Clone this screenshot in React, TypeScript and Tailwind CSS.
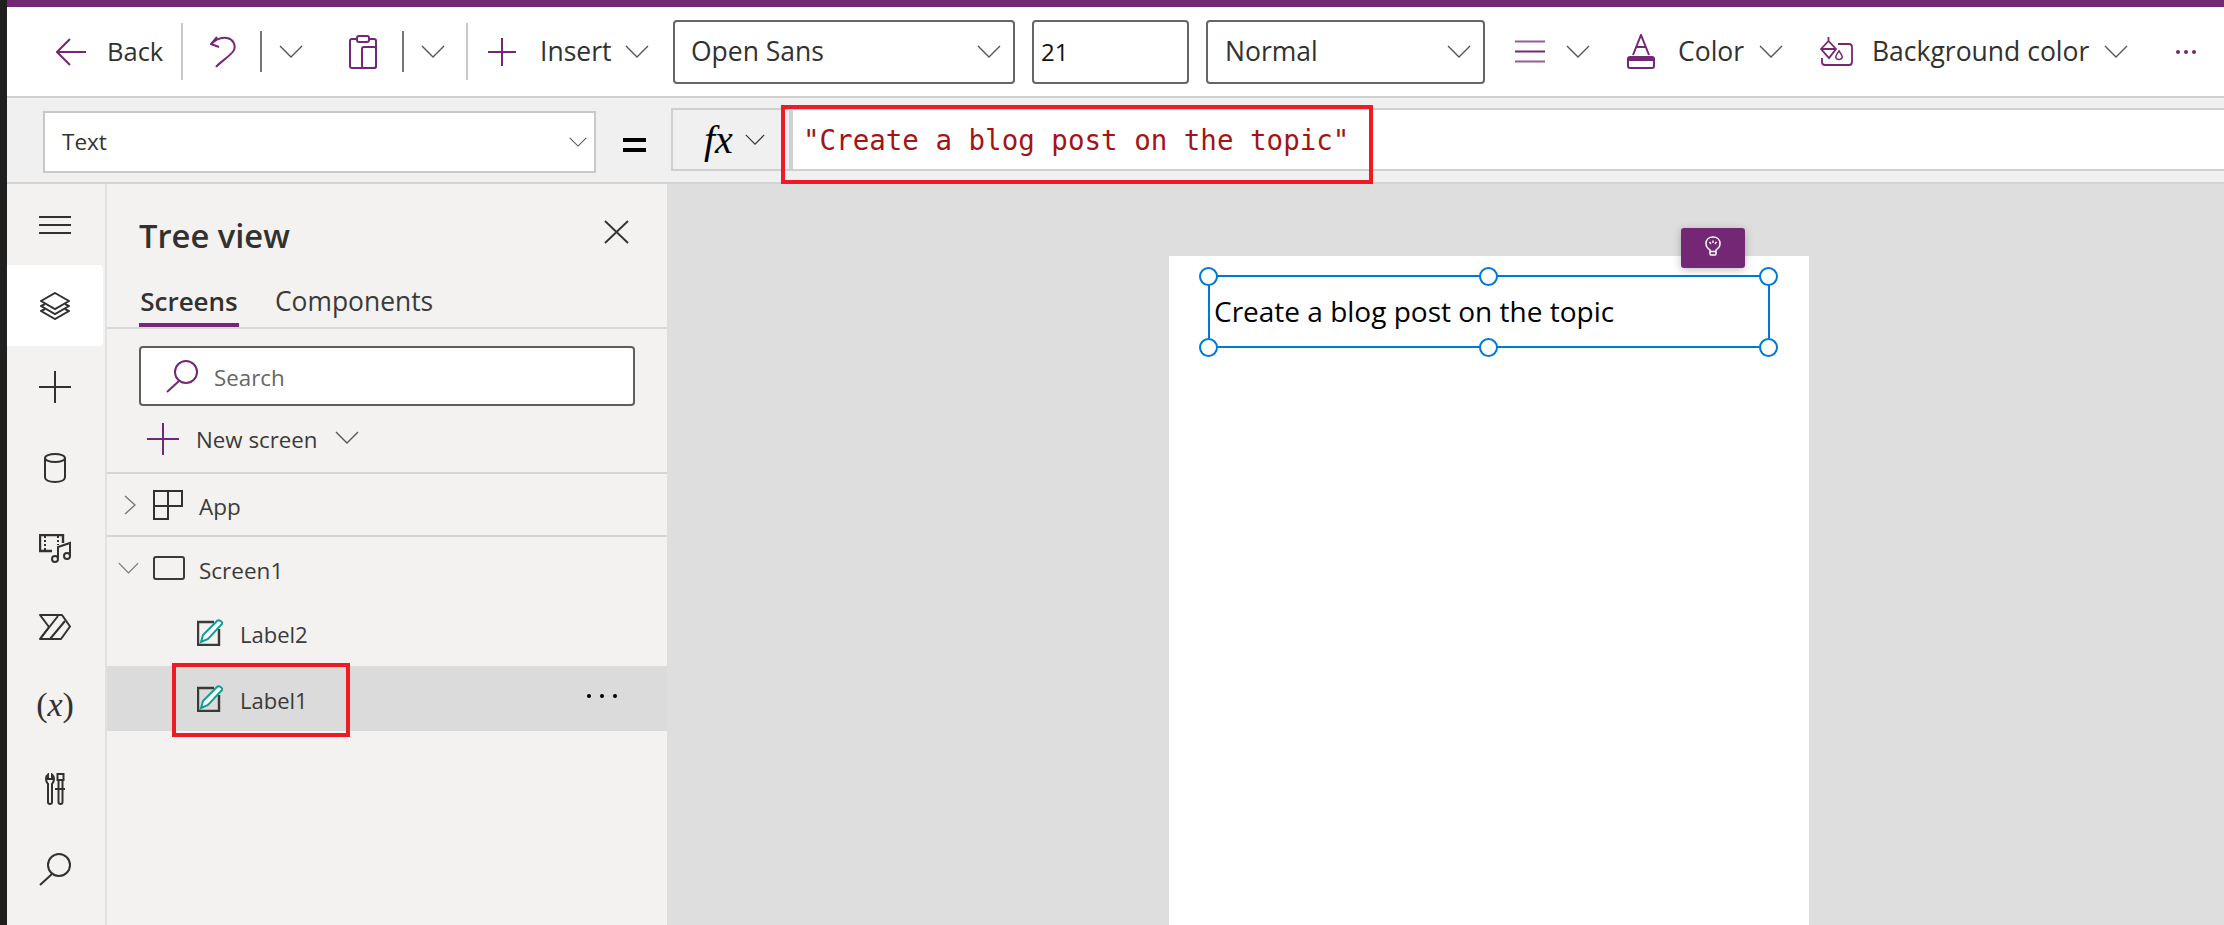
const PURPLE = "#742774";
const DARK = "#323130";

function Chevron({ className = "", color = "#555" }: { className?: string; color?: string }) {
  return (
    <svg width="24" height="13" viewBox="0 0 24 13" fill="none" className={className}>
      <path d="M1 1 L12 12 L23 1" stroke={color} strokeWidth="1.4" />
    </svg>
  );
}

function Plus({ size, color, className = "" }: { size: number; color: string; className?: string }) {
  const m = size / 2;
  return (
    <svg width={size} height={size} viewBox={`0 0 ${size} ${size}`} className={className}>
      <path d={`M0 ${m} H${size} M${m} 0 V${size}`} stroke={color} strokeWidth="2" />
    </svg>
  );
}

function Magnifier({ color, className = "" }: { color: string; className?: string }) {
  return (
    <svg width="32" height="33" viewBox="0 0 32 33" fill="none" className={className}>
      <ellipse cx="20" cy="12" rx="11" ry="11" stroke={color} strokeWidth="2" />
      <path d="M13 21 L1 32" stroke={color} strokeWidth="2" />
    </svg>
  );
}

function LabelIcon() {
  return (
    <svg width="26" height="27" viewBox="0 0 26 27" fill="none">
      <path d="M17 3 H1 V26 H22 V10" stroke="#3b3a39" strokeWidth="2.4" />
      <path d="M4 23 L6 16 L20 2 C22 0 26 3 25 5 L11 20 Z" fill="#fff" stroke="#0f9d94" strokeWidth="2" />
    </svg>
  );
}

function RailIcon({ children, active = false }: { children: React.ReactNode; active?: boolean }) {
  return (
    <div className={`w-[96px] h-[81px] flex items-center justify-center ${active ? "bg-white rounded-r-[4px]" : ""}`}>
      {children}
    </div>
  );
}

function Toolbar() {
  return (
    <div className="h-[91px] bg-white border-b-2 border-[#d0d0d0] flex items-center text-[26.5px] text-[#323130]">
      <svg width="30" height="28" viewBox="0 0 30 28" fill="none" className="ml-[49px]">
        <path d="M14 1 L1 14 L14 27 M1 14 H30" stroke={PURPLE} strokeWidth="2" />
      </svg>
      <span className="ml-[21px] w-[58px] text-[25.5px]">Back</span>
      <div className="ml-[16px] w-[2px] h-[57px] bg-[#c8c8c8]" />
      <svg width="26" height="32" viewBox="0 0 26 32" fill="none" className="ml-[27px]">
        <path d="M7 1 L1 8 L9 11 M1 8 C6 3 12 1 17 2 C23 3 26 9 24 14 C22 19 10 26 6 31" stroke={PURPLE} strokeWidth="2" />
      </svg>
      <div className="ml-[24px] w-[2px] h-[41px] bg-[#777]" />
      <Chevron className="ml-[17px]" />
      <svg width="28" height="34" viewBox="0 0 28 34" fill="none" className="ml-[46px]">
        <path d="M8 4 H3 Q1 4 1 6 V31 Q1 33 3 33 H25 Q27 33 27 31 V6 Q27 4 25 4 H20" stroke={PURPLE} strokeWidth="2" />
        <rect x="8" y="1" width="12" height="6" rx="2" stroke={PURPLE} strokeWidth="2" fill="#fff" />
        <rect x="13" y="12" width="14" height="21" rx="2" stroke={PURPLE} strokeWidth="2" fill="#fff" />
      </svg>
      <div className="ml-[25px] w-[2px] h-[41px] bg-[#777]" />
      <Chevron className="ml-[17px]" />
      <div className="ml-[21px] w-[2px] h-[57px] bg-[#c8c8c8]" />
      <Plus size={28} color={PURPLE} className="ml-[20px]" />
      <span className="ml-[24px] w-[70px]">Insert</span>
      <Chevron className="ml-[15px]" />
      <div className="ml-[24px] w-[342px] h-[64px] border-2 border-[#666] rounded-[4px] flex items-center pl-[16px]">
        <span className="flex-1">Open Sans</span>
        <Chevron className="mr-[12px]" />
      </div>
      <div className="ml-[17px] w-[157px] h-[64px] border-2 border-[#666] rounded-[4px] flex items-center pl-[7px] text-[24px] text-[#111]">21</div>
      <div className="ml-[17px] w-[279px] h-[64px] border-2 border-[#666] rounded-[4px] flex items-center pl-[17px]">
        <span className="flex-1">Normal</span>
        <Chevron className="mr-[12px]" />
      </div>
      <svg width="30" height="23" viewBox="0 0 30 23" fill="none" className="ml-[30px]">
        <path d="M0 1.5 H30 M0 21.5 H30" stroke={PURPLE} strokeWidth="2" opacity="0.75" />
        <path d="M0 11.5 H30" stroke={PURPLE} strokeWidth="2" />
      </svg>
      <Chevron className="ml-[21px]" />
      <svg width="28" height="35" viewBox="0 0 28 35" fill="none" className="ml-[37px]">
        <path d="M6 21 L14 1 L22 21 M9 13 H19" stroke={PURPLE} strokeWidth="2" />
        <rect x="1" y="23" width="26" height="11" rx="2" stroke={PURPLE} strokeWidth="2" fill="#fff" />
        <path d="M1 25 Q1 23 3 23 H25 Q27 23 27 25 V27 H1 Z" fill={PURPLE} />
      </svg>
      <span className="ml-[23px] w-[66px]">Color</span>
      <Chevron className="ml-[15px]" />
      <svg width="35" height="30" viewBox="0 0 35 30" fill="none" className="ml-[35px]">
        <path d="M20 7 H31 Q34 7 34 10 V25 Q34 28 31 28 H7 Q4 28 4 25 V21" stroke={PURPLE} strokeWidth="1.8" />
        <path d="M10.5 0 V5 M3 12 L10.5 4 L18 12 L11 21 Z M3 12 H18" stroke={PURPLE} strokeWidth="1.8" />
        <path d="M21 14 C19 17 17 19 18 21 C19 23 23 23 24 21 C25 19 23 17 21 14 Z" stroke={PURPLE} strokeWidth="1.6" />
      </svg>
      <span className="ml-[19px] w-[216px] whitespace-nowrap">Background color</span>
      <Chevron className="ml-[16px]" />
      <div className="ml-[48px] flex gap-[4px]">
        <div className="w-[4px] h-[4px] rounded-full bg-[#742774]" />
        <div className="w-[4px] h-[4px] rounded-full bg-[#742774]" />
        <div className="w-[4px] h-[4px] rounded-full bg-[#742774]" />
      </div>
    </div>
  );
}

function FormulaBar() {
  return (
    <div className="relative h-[86px] bg-[#f0f0f0] border-b-2 border-[#d4d4d4] flex items-start">
      <div className="ml-[36px] mt-[13px] w-[553px] h-[62px] bg-white border-2 border-[#c8c8c8] flex items-center pl-[17px] pr-[7px] text-[22.5px] text-[#333]">
        <span className="flex-1">Text</span>
        <Chevron className="w-[18px] h-[10px]" />
      </div>
      <div className="ml-[27px] mt-[40px] w-[23px] h-[14px] border-y-[4px] border-black" />
      <div className="ml-[25px] mt-[10px] w-[120px] h-[63px] border-2 border-[#d0d0d0] flex items-center pl-[31px]">
        <span className="font-['Liberation_Serif',serif] italic text-[40px] text-black leading-none">fx</span>
        <Chevron className="ml-[12px] w-[20px] h-[11px]" color="#333" />
      </div>
      <div className="mt-[10px] flex-1 h-[63px] bg-white border-y-2 border-l-2 border-[#d0d0d0] flex items-center pl-[10px] pt-[3px] font-['DejaVu_Sans_Mono',monospace] text-[27.5px] text-[#a31515] whitespace-pre">
        "Create a blog post on the topic"
      </div>
      <div className="absolute left-[774px] top-[7px] w-[592px] h-[79px] border-[4px] border-[#ed1c24]" />
    </div>
  );
}

function Rail() {
  return (
    <div className="w-[100px] bg-[#f3f2f1] border-r-2 border-[#e1e1e1] flex flex-col">
      <RailIcon>
        <svg width="32" height="18" viewBox="0 0 32 18" fill="none">
          <path d="M0 1 H32 M0 9 H32 M0 17 H32" stroke={DARK} strokeWidth="2" />
        </svg>
      </RailIcon>
      <RailIcon active>
        <svg width="30" height="28" viewBox="0 0 30 28" fill="none">
          <path d="M15 1 L29 9 L15 17 L1 9 Z" stroke={DARK} strokeWidth="2" fill="#fff" />
          <path d="M5 12 L1 14 L15 22 L29 14 L25 12" stroke={DARK} strokeWidth="2" />
          <path d="M5 17 L1 19 L15 27 L29 19 L25 17" stroke={DARK} strokeWidth="2" />
        </svg>
      </RailIcon>
      <RailIcon>
        <Plus size={32} color={DARK} />
      </RailIcon>
      <RailIcon>
        <svg width="22" height="30" viewBox="0 0 22 30" fill="none">
          <ellipse cx="11" cy="5" rx="10" ry="4" stroke={DARK} strokeWidth="2" />
          <path d="M1 5 V24 C1 27 5 29 11 29 C17 29 21 27 21 24 V5" stroke={DARK} strokeWidth="2" />
        </svg>
      </RailIcon>
      <RailIcon>
        <svg width="33" height="29" viewBox="0 0 33 29" fill="none">
          <path d="M13 17 H1 V1 H24 V9" stroke={DARK} strokeWidth="2.4" />
          <path d="M6 2 V17 M19 2 V11" stroke={DARK} strokeWidth="2" strokeDasharray="2 2" />
          <path d="M19 24 V13 L31 9 V22" stroke={DARK} strokeWidth="2" />
          <circle cx="16" cy="25" r="3" stroke={DARK} strokeWidth="2" />
          <circle cx="28" cy="22" r="3" stroke={DARK} strokeWidth="2" />
        </svg>
      </RailIcon>
      <RailIcon>
        <svg width="32" height="26" viewBox="0 0 32 26" fill="none" className="mb-[6px]">
          <path d="M1 1 H23 L31 12.5 L22 25 H1 L10 13 Z" stroke={DARK} strokeWidth="2" strokeLinejoin="round" />
          <path d="M1 25 L19 2 M11 25 L26 7" stroke={DARK} strokeWidth="2" />
        </svg>
      </RailIcon>
      <RailIcon>
        <span className="mb-[11px] font-['Liberation_Serif',serif] text-[34px] text-[#323130] leading-none">
          (<span className="italic">x</span>)
        </span>
      </RailIcon>
      <RailIcon>
        <svg width="20" height="32" viewBox="0 0 20 32" fill="none" className="mb-[6px]">
          <path d="M3 1.5 C1.5 2.5 1 4 1 6 C1 8 2 10 3 11 V29 Q3 31 5 31 Q7 31 7 29 V11 C8 10 9 8 9 6 C9 4 8.5 2.5 7 1.5 V6 H3 Z" stroke={DARK} strokeWidth="2" />
          <path d="M12.5 1 H18.5 V7 H12.5 Z M13.5 7 V29 Q13.5 31 15.5 31 Q17.5 31 17.5 29 V7 M10 16 H20" stroke={DARK} strokeWidth="2" />
        </svg>
      </RailIcon>
      <RailIcon>
        <Magnifier color={DARK} className="mb-[6px]" />
      </RailIcon>
    </div>
  );
}

function TreePanel() {
  return (
    <div className="w-[560px] bg-[#f3f2f1] flex flex-col text-[#3b3a39]">
      <div className="h-[78px] px-[32px] flex items-end justify-between">
        <span className="mb-[6px] text-[32.7px] font-semibold leading-[40px] text-[#323130]">Tree view</span>
        <svg width="25" height="24" viewBox="0 0 25 24" fill="none" className="mr-[6px] mb-[18px]">
          <path d="M1 1 L24 23 M24 1 L1 23" stroke={DARK} strokeWidth="1.8" />
        </svg>
      </div>
      <div className="h-[67px] border-b-2 border-[#d8d8d8] px-[32px] flex items-end text-[26.4px]">
        <div className="w-[100px] text-center border-b-4 border-[#742774] font-semibold text-[26px] text-[#323130] h-[50px] leading-[48px] whitespace-nowrap">Screens</div>
        <div className="ml-[36px] h-[50px] leading-[48px]">Components</div>
      </div>
      <div className="mx-[32px] mt-[17px] w-[496px] h-[60px] bg-white border-2 border-[#605e5c] rounded-[4px] flex items-center pl-[25px] text-[#666] text-[22.3px]">
        <Magnifier color={PURPLE} />
        <span className="ml-[16px] mt-[3px]">Search</span>
      </div>
      <div className="h-[68px] border-b-2 border-[#d4d4d4] flex items-center pl-[40px] text-[22.3px]">
        <Plus size={32} color={PURPLE} />
        <span className="ml-[17px] mt-[2px]">New screen</span>
        <Chevron className="ml-[17px] mb-[4px]" />
      </div>
      <div className="h-[63px] border-b-2 border-[#d4d4d4] flex items-center text-[22.5px]">
        <svg width="12" height="20" viewBox="0 0 12 20" fill="none" className="ml-[17px]">
          <path d="M1 1 L11 10 L1 19" stroke="#777" strokeWidth="1.4" />
        </svg>
        <svg width="30" height="30" viewBox="0 0 30 30" fill="none" className="ml-[17px]">
          <path d="M1 1 H29 V16 H15 V29 H1 Z M15 1 V16 H1" stroke={DARK} strokeWidth="2" />
        </svg>
        <span className="ml-[16px] mt-[5px]">App</span>
      </div>
      <div className="h-[62px] flex items-center text-[22.5px]">
        <Chevron className="ml-[11px] w-[21px] h-[12px]" color="#777" />
        <div className="ml-[14px] w-[32px] h-[24px] border-2 border-[#3b3a39] rounded-[3px]" />
        <span className="ml-[14px] mt-[5px]">Screen1</span>
      </div>
      <div className="h-[67px] flex items-center pl-[90px] text-[22px]">
        <LabelIcon />
        <span className="ml-[17px] mt-[4px]">Label2</span>
      </div>
      <div className="relative h-[65px] bg-[#dbdbdb] flex items-center pl-[90px] text-[22px]">
        <LabelIcon />
        <span className="ml-[17px] mt-[3px]">Label1</span>
        <div className="ml-auto mr-[50px] mb-[6px] flex gap-[9px]">
          <div className="w-[4px] h-[4px] rounded-full bg-black" />
          <div className="w-[4px] h-[4px] rounded-full bg-black" />
          <div className="w-[4px] h-[4px] rounded-full bg-black" />
        </div>
        <div className="absolute left-[65px] top-[-3px] w-[178px] h-[74px] border-[4px] border-[#ed1c24]" />
      </div>
    </div>
  );
}

function Handle({ className }: { className: string }) {
  return <div className={`absolute w-[19px] h-[19px] rounded-full bg-white border-2 border-[#0078d4] ${className}`} />;
}

function Canvas() {
  return (
    <div className="flex-1 bg-[#dedede] pl-[502px] pt-[72px]">
      <div className="relative w-[640px] h-[700px] bg-white pl-[39px] pt-[19px]">
        <div className="relative w-[562px] h-[73px] border-2 border-[#0078d4] flex items-center pl-[4px] pb-[2px] text-[28px] text-black whitespace-nowrap">
          Create a blog post on the topic
          <Handle className="left-[-11px] top-[-10px]" />
          <Handle className="left-[269px] top-[-10px]" />
          <Handle className="left-[549px] top-[-10px]" />
          <Handle className="left-[-11px] top-[61px]" />
          <Handle className="left-[269px] top-[61px]" />
          <Handle className="left-[549px] top-[61px]" />
        </div>
        <div className="absolute left-[512px] top-[-28px] w-[64px] h-[40px] bg-[#742774] rounded-[3px] shadow-[0_2px_8px_rgba(0,0,0,0.25)] flex items-center justify-center">
          <svg width="16" height="20" viewBox="0 0 16 20" fill="none" className="mb-[4px]">
            <path d="M5 14 C2 12 1 10 1 7.5 C1 3.5 4 1 8 1 C12 1 15 3.5 15 7.5 C15 10 14 12 11 14 V18 Q11 19 10 19 H6 Q5 19 5 18 Z M5 15.5 H11" stroke="#fff" strokeWidth="1.5" />
            <path d="M8 4.5 V7 M4.5 6 L6 8 M11.5 6 L10 8" stroke="#fff" strokeWidth="1.4" />
          </svg>
        </div>
      </div>
    </div>
  );
}

export default function App() {
  return (
    <div className="w-[2224px] h-[925px] flex overflow-hidden font-['Open_Sans',sans-serif] bg-white">
      <div className="w-[7px] bg-[#1f1f1f]" />
      <div className="flex-1 flex flex-col min-w-0">
        <div className="h-[7px] bg-[#742774]" />
        <Toolbar />
        <FormulaBar />
        <div className="flex-1 flex min-h-0">
          <Rail />
          <TreePanel />
          <Canvas />
        </div>
      </div>
    </div>
  );
}
